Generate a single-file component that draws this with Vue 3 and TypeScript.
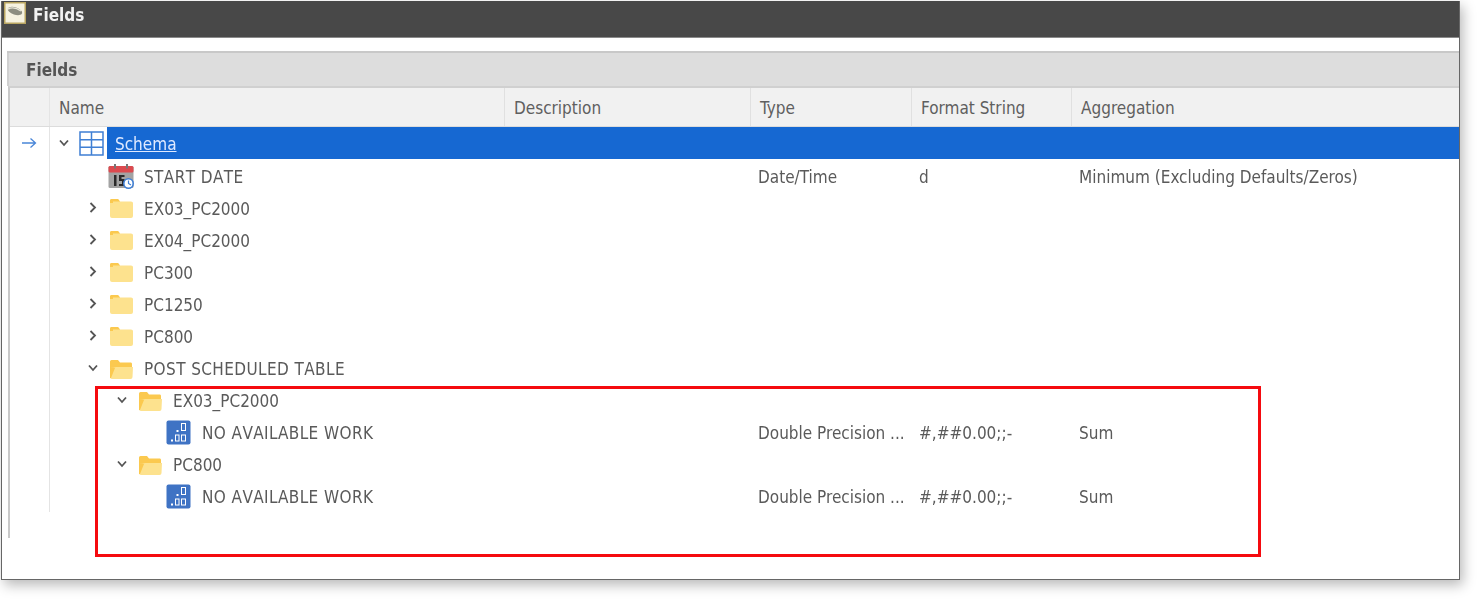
<script setup lang="ts">
interface Row {
  name: string
  level: number
  icon: 'date' | 'folder' | 'open' | 'measure'
  caret?: 'down' | 'right'
  type?: string
  format?: string
  agg?: string
}
const columns = ['Name', 'Description', 'Type', 'Format String', 'Aggregation']
const rows: Row[] = [
  { name: 'START DATE', level: 1, icon: 'date', type: 'Date/Time', format: 'd', agg: 'Minimum (Excluding Defaults/Zeros)' },
  { name: 'EX03_PC2000', level: 1, icon: 'folder', caret: 'right' },
  { name: 'EX04_PC2000', level: 1, icon: 'folder', caret: 'right' },
  { name: 'PC300', level: 1, icon: 'folder', caret: 'right' },
  { name: 'PC1250', level: 1, icon: 'folder', caret: 'right' },
  { name: 'PC800', level: 1, icon: 'folder', caret: 'right' },
  { name: 'POST SCHEDULED TABLE', level: 1, icon: 'open', caret: 'down' },
  { name: 'EX03_PC2000', level: 2, icon: 'open', caret: 'down' },
  { name: 'NO AVAILABLE WORK', level: 3, icon: 'measure', type: 'Double Precision ...', format: '#,##0.00;;-', agg: 'Sum' },
  { name: 'PC800', level: 2, icon: 'open', caret: 'down' },
  { name: 'NO AVAILABLE WORK', level: 3, icon: 'measure', type: 'Double Precision ...', format: '#,##0.00;;-', agg: 'Sum' },
]
function indent(level: number): string {
  return `${(level - 1) * 29}px`
}
</script>

<template>
  <div class="page">
    <div class="window">
      <div class="titlebar">
        <svg class="appicon" width="22" height="22" viewBox="0 0 22 22">
          <rect x="0.75" y="0.75" width="20.5" height="20.5" fill="#f6f2e0" stroke="#b9a560" stroke-width="1.5" />
          <ellipse cx="11" cy="9" rx="7.5" ry="3.6" fill="#8d8d80" transform="rotate(18 11 9)" />
          <path d="M4 7 Q10 4 17 9" fill="none" stroke="#e8e6d8" stroke-width="1.4" />
        </svg>
        <span class="title">Fields</span>
      </div>
      <div class="panel">
        <div class="group">Fields</div>
        <div class="grid">
          <div class="head row-grid">
            <div class="gutter"></div>
            <div v-for="c in columns" :key="c" class="hcell">{{ c }}</div>
          </div>
          <div class="selected row-grid">
            <div class="gutter sel-gutter">
              <svg width="16" height="12" viewBox="0 0 16 12">
                <path d="M1 6H14.5M9.5 1.5L14.5 6L9.5 10.5" fill="none" stroke="#4a86d8" stroke-width="1.3" />
              </svg>
            </div>
            <div class="namecell">
              <span class="caret">
                <svg width="10" height="8" viewBox="0 0 10 8"><path d="M1 1.5L5 6L9 1.5" fill="none" stroke="#555" stroke-width="1.8" /></svg>
              </span>
              <svg class="table-ic" width="25" height="25" viewBox="0 0 25 25">
                <path d="M1 1H24V24H1ZM1 8.7H24M1 16.3H24M12.5 1V24" fill="#fff" stroke="#3f7fd4" stroke-width="1.5" />
              </svg>
              <span class="focus">Schema</span>
            </div>
          </div>
          <div v-for="(r, i) in rows" :key="i" class="row row-grid">
            <div class="gutter"></div>
            <div class="treecell" :style="{ paddingLeft: indent(r.level) }">
              <span class="caret2">
                <svg v-if="r.caret === 'down'" width="10" height="8" viewBox="0 0 10 8"><path d="M1 1.5L5 6L9 1.5" fill="none" stroke="#555" stroke-width="1.8" /></svg>
                <svg v-else-if="r.caret === 'right'" class="caret-right" width="8" height="11" viewBox="0 0 8 11"><path d="M1.5 1L6 5.5L1.5 10" fill="none" stroke="#555" stroke-width="1.8" /></svg>
              </span>
              <svg v-if="r.icon === 'date'" class="ic" width="26" height="26" viewBox="0 0 26 26">
                <rect x="0.5" y="3" width="25" height="22" rx="1.5" fill="#a3a3a3" />
                <rect x="0.5" y="3" width="25" height="6.5" rx="1.5" fill="#dc4a4f" />
                <rect x="6" y="1" width="2" height="4.5" fill="#777" />
                <rect x="18" y="1" width="2" height="4.5" fill="#777" />
                <path d="M6 12H8.5V23H6ZM11 12H16.5V14H13.5V16H16.5V23H11V21H14V18H11Z" fill="#2a2a2a" />
                <circle cx="20.5" cy="20.5" r="4.7" fill="#fff" stroke="#3f7fd4" stroke-width="1.6" />
                <path d="M20.5 17.5V20.5L23 22" fill="none" stroke="#3f7fd4" stroke-width="1.2" />
              </svg>
              <svg v-else-if="r.icon === 'folder'" class="ic" width="26" height="26" viewBox="0 0 26 26">
                <path d="M2 5.5Q2 4 3.5 4H10L12 6.5H23Q25 6.5 25 8V21Q25 23 23 23H4Q2 23 2 21Z" fill="#fde28e" />
                <path d="M2 5.5Q2 4 3.5 4H10L12 6.5H5V8H2Z" fill="#fbc94f" />
              </svg>
              <svg v-else-if="r.icon === 'open'" class="ic" width="26" height="26" viewBox="0 0 26 26">
                <g transform="translate(0 1)">
                  <path d="M2 5.5Q2 4 3.5 4H10L12 6.5H23Q24 6.5 24 8V12H2Z" fill="#fbc94f" />
                  <path d="M2 21V12Q6 12 8 11H25L24.5 21Q24.5 23 22.5 23H4Q2 23 2 21Z" fill="#fde28e" />
                  <path d="M2 22V12H7L3 22Z" fill="#fbc94f" />
                </g>
              </svg>
              <svg v-else class="ic" width="26" height="26" viewBox="0 0 26 26">
                <rect x="0.5" y="1.5" width="24" height="24" rx="2" fill="#3f73c4" />
                <rect x="15.5" y="4.5" width="4" height="7" fill="none" stroke="#fff" stroke-width="1" />
                <rect x="9.5" y="16" width="3.5" height="6" fill="none" stroke="#fff" stroke-width="1" />
                <rect x="15.5" y="16" width="4" height="6" fill="none" stroke="#fff" stroke-width="1" />
                <rect x="5" y="20.5" width="2" height="2" fill="#fff" />
                <rect x="10.5" y="11" width="2" height="2" fill="#fff" />
              </svg>
              <span class="name" :class="{ wide: r.name.includes(' ') }">{{ r.name }}</span>
            </div>
            <div class="cell"></div>
            <div class="cell">{{ r.type }}</div>
            <div class="cell">{{ r.format }}</div>
            <div class="cell">{{ r.agg }}</div>
          </div>
        </div>
      </div>
      <div class="redbox"></div>
    </div>
  </div>
</template>

<style>
html, body { margin: 0; background: #fff; }
</style>

<style scoped>
.page {
  height: 600px;
  padding: 1px 0 0 1px;
  box-sizing: border-box;
  font-family: "DejaVu Sans", "Noto Sans", sans-serif;
  font-stretch: condensed;
  overflow: hidden;
}
.window {
  position: relative;
  width: 1459px;
  height: 579px;
  box-sizing: border-box;
  background: #fff;
  border: 1px solid #666;
  border-top: 0;
  box-shadow: 3px 5px 12px rgba(0, 0, 0, 0.28);
  display: flex;
  flex-direction: column;
  filter: blur(0.4px);
}
.titlebar {
  height: 37px;
  flex: none;
  background: #484848;
  border-bottom: 1px solid #8a8a8a;
  display: flex;
  align-items: flex-start;
  box-sizing: border-box;
  padding: 1px 0 0 2px;
  gap: 7px;
  color: #f2f2f2;
  font-size: 17px;
  font-weight: 700;
}
.appicon { flex: none; }
.title { line-height: 26px; }
.panel {
  margin-top: 13px;
  margin-left: 5px;
  border-top: 2px solid #c8c8c8;
  background: #fff;
  flex: 1;
}
.group {
  box-sizing: border-box;
  height: 33px;
  padding: 2px 0 0 17px;
  background: #dddddd;
  border-left: 2px solid #cfcfcf;
  font-size: 17px;
  font-weight: 700;
  color: #555;
  line-height: 31px;
}
.grid {
  margin-left: 1px;
  border-top: 2px solid #d0d0d0;
  border-left: 2px solid #c9c9c9;
  height: 450px;
  display: flex;
  flex-direction: column;
  position: relative;
}
.row-grid {
  display: grid;
  grid-template-columns: 40px 455px 246px 161px 160px 1fr;
}
.head {
  height: 38px;
  flex: none;
  background: #f1f1f1;
  border-bottom: 1px solid #dcdcdc;
}
.gutter { border-right: 1px solid #e4e4e4; }
.hcell {
  line-height: 36px;
  padding: 2px 0 0 9px;
  font-size: 17px;
  color: #5f5f5f;
  border-right: 1px solid #e0e0e0;
}
.hcell:last-child { border-right: 0; }
.selected {
  height: 32px;
  flex: none;
  background: #1668d2;
}
.sel-gutter {
  background: #fff;
  display: flex;
  align-items: center;
  padding-left: 11px;
}
.namecell {
  display: flex;
  align-items: center;
  padding-left: 9px;
  grid-column: 2;
  background: linear-gradient(90deg, #fff 0 57px, #1668d2 57px);
}
.caret { width: 20px; display: flex; }
.table-ic { flex: none; margin-right: 4px; }
.focus {
  color: #dfe9ff;
  font-size: 17px;
  line-height: 30px;
  padding: 2px 0 0 7px;
  text-decoration: underline;
}
.row { height: 32px; flex: none; font-size: 17px; color: #5a5a5a; line-height: 30px; }
.treecell {
  display: flex;
  align-items: center;
}
.caret2 {
  flex: none;
  width: 58px;
  padding-left: 38px;
  box-sizing: border-box;
  display: flex;
  align-items: center;
}
.caret-right { margin-left: 1px; }
.ic { flex: none; margin-right: 10px; }
.name { white-space: nowrap; padding-top: 3px; font-kerning: none; }
.name.wide { letter-spacing: 0.4px; }
.cell { padding: 3px 0 0 7px; white-space: nowrap; }
.redbox {
  position: absolute;
  left: 93px;
  top: 385px;
  width: 1166px;
  height: 171px;
  box-sizing: border-box;
  border: 3px solid #f50a0f;
}
</style>
